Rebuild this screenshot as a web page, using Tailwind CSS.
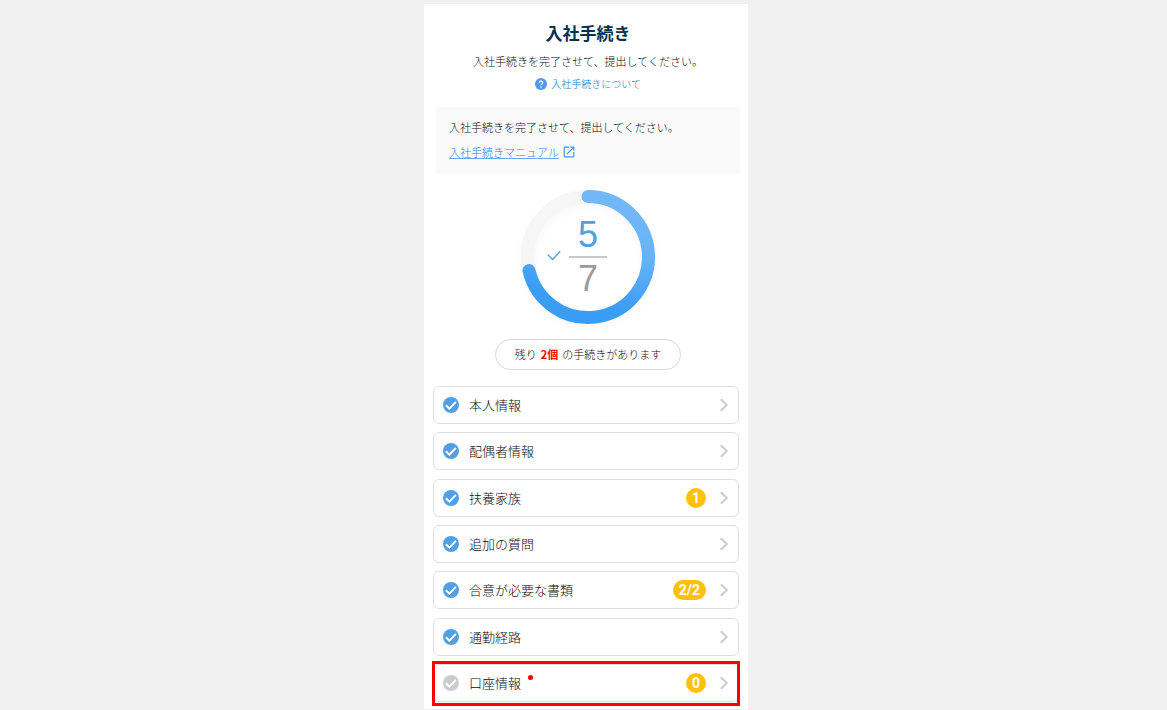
<!DOCTYPE html>
<html lang="ja">
<head>
    <meta charset="UTF-8">
    <meta name="viewport" content="width=device-width, initial-scale=1.0">
    <title>入社手続き</title>
    <script src="https://cdn.jsdelivr.net/npm/@tailwindcss/browser@4"></script>
    <style>
        body { font-family: 'Noto Sans CJK JP', sans-serif; }
    </style>
</head>
<body class="bg-[#f1f1f1] text-[#0c0c0c] font-light">

    <!-- アイコン -->
    <svg class="hidden">
        <symbol id="icon-check" viewBox="0 0 16 16">
            <circle cx="8" cy="8" r="8" fill="currentColor"/>
            <path d="M2.9 8.200l3.500 3.400 6.500-6.700" fill="none" stroke="#fff" stroke-width="1.9"/>
        </symbol>
        <symbol id="icon-chevron" viewBox="0 0 10 14">
            <path d="M1.800 1.200L7.800 7l-6 5.800" fill="none" stroke="currentColor" stroke-width="2"/>
        </symbol>
    </svg>

    <div class="min-h-screen flex flex-col pt-1 pb-px pl-[5px]">
        <main class="w-full max-w-[324px] mx-auto flex-1 flex flex-col bg-white pt-[17px] pb-[7px]">

            <header class="pl-3 pr-2 text-center">
                <h1 class="text-[17px] leading-6 font-bold text-[#06304c]">入社手続き</h1>
                <p class="mt-[6px] text-[11px] leading-5">入社手続きを完了させて、提出してください。</p>
                <a href="#" class="mt-[3px] flex items-center justify-center gap-1 text-[10px] leading-5 text-[#007bdc]">
                    <svg class="size-3" viewBox="0 0 12 12">
                        <circle cx="6" cy="6" r="6" fill="#5596ee"/>
                        <path d="M4.300 4.700a1.700 1.700 0 1 1 2.600 1.400C6.200 6.500 6 6.700 6 7.300" fill="none" stroke="#fff" stroke-width="1.2"/>
                        <circle cx="6" cy="9" r="0.8" fill="#fff"/>
                    </svg>
                    入社手続きについて
                </a>
            </header>

            <section class="mt-[13px] ml-3 mr-2 px-[13px] pt-[10px] pb-3 bg-[#fafafa] text-[11px] leading-5">
                <p>入社手続きを完了させて、提出してください。</p>
                <a href="#" class="mt-[5px] flex items-center gap-1 text-[#2f7cf2]">
                    <span class="underline decoration-[#6ba3f5]">入社手続きマニュアル</span>
                    <svg class="size-3" viewBox="2 2 20 20" fill="#4f91f3"><path d="M19 19H5V5h7V3H5a2 2 0 0 0-2 2v14a2 2 0 0 0 2 2h14c1.100 0 2-.9 2-2v-7h-2v7zM14 3v2h3.590l-9.830 9.830 1.410 1.410L19 6.410V10h2V3h-7z"/></svg>
                </a>
            </section>

            <!-- 進捗 -->
            <section class="pl-3 pr-2 flex flex-col items-center">
                <div class="relative mt-4 size-[134px]">
                    <svg class="block size-full overflow-visible" viewBox="0 0 134 134" fill="none">
                        <defs>
                            <linearGradient id="ring" gradientUnits="userSpaceOnUse" x1="90" y1="10" x2="60" y2="128">
                                <stop offset="0" stop-color="#72b8f8"/>
                                <stop offset="0.4" stop-color="#66b2f8"/>
                                <stop offset="0.85" stop-color="#3a9df5"/>
                            </linearGradient>
                            <filter id="soft" x="-20%" y="-20%" width="140%" height="140%">
                                <feGaussianBlur stdDeviation="4"/>
                            </filter>
                        </defs>
                        <circle cx="67" cy="70" r="60" stroke="#000" stroke-opacity="0.03" stroke-width="13" filter="url(#soft)"/>
                        <circle cx="67" cy="67" r="60.500" stroke="#f6f6f6" stroke-width="13"/>
                        <path d="M67 6.500A60.500 60.500 0 1 1 8 80.500" stroke="url(#ring)" stroke-width="13" stroke-linecap="round"/>
                    </svg>
                    <div class="absolute inset-0 pb-px flex flex-col items-center justify-center font-['Liberation_Sans',Arial,sans-serif] text-[36px] leading-[42px]">
                        <span class="text-[#529fe2]">5</span>
                        <span class="w-[38px] border-t-2 border-[#c8c8c8]"></span>
                        <span class="text-[#9c9c9c]">7</span>
                    </div>
                    <svg class="absolute left-[26px] top-[60px] w-[14px] h-[11px]" viewBox="0 0 14 11" fill="none" stroke="#529fe2" stroke-width="1.4"><path d="M0.800 4.800l4.800 4.700L13.200 1.300"/></svg>
                </div>
                <p class="mt-[15px] w-[186px] h-[31px] flex items-center justify-center gap-1 rounded-full border border-[#d8d8d8] text-[11px]">
                    残り <strong class="font-bold text-[#ff0000]">2個</strong> の手続きがあります
                </p>
            </section>

            <!-- 手続き一覧 -->
            <ul class="mt-4 px-[9px] flex-1 flex flex-col justify-between text-[13px] leading-5">
                <li>
                    <a href="#" class="h-[38px] pl-[9px] pr-[9px] flex items-center rounded-md border border-[#dedede]">
                        <svg class="size-4 mr-[10px] text-[#539fe3]"><use href="#icon-check"/></svg>
                        <span>本人情報</span>
                        <svg class="ml-auto w-[10px] h-[14px] text-[#cccccc]"><use href="#icon-chevron"/></svg>
                    </a>
                </li>
                <li>
                    <a href="#" class="h-[38px] pl-[9px] pr-[9px] flex items-center rounded-md border border-[#dedede]">
                        <svg class="size-4 mr-[10px] text-[#539fe3]"><use href="#icon-check"/></svg>
                        <span>配偶者情報</span>
                        <svg class="ml-auto w-[10px] h-[14px] text-[#cccccc]"><use href="#icon-chevron"/></svg>
                    </a>
                </li>
                <li>
                    <a href="#" class="h-[38px] pl-[9px] pr-[9px] flex items-center rounded-md border border-[#dedede]">
                        <svg class="size-4 mr-[10px] text-[#539fe3]"><use href="#icon-check"/></svg>
                        <span>扶養家族</span>
                        <span class="ml-auto mr-[13px] px-[6px] rounded-full bg-[#ffc107] font-[Roboto,sans-serif] text-[14px] font-bold text-white">1</span>
                        <svg class="w-[10px] h-[14px] text-[#cccccc]"><use href="#icon-chevron"/></svg>
                    </a>
                </li>
                <li>
                    <a href="#" class="h-[38px] pl-[9px] pr-[9px] flex items-center rounded-md border border-[#dedede]">
                        <svg class="size-4 mr-[10px] text-[#539fe3]"><use href="#icon-check"/></svg>
                        <span>追加の質問</span>
                        <svg class="ml-auto w-[10px] h-[14px] text-[#cccccc]"><use href="#icon-chevron"/></svg>
                    </a>
                </li>
                <li>
                    <a href="#" class="h-[38px] pl-[9px] pr-[9px] flex items-center rounded-md border border-[#dedede]">
                        <svg class="size-4 mr-[10px] text-[#539fe3]"><use href="#icon-check"/></svg>
                        <span>合意が必要な書類</span>
                        <span class="ml-auto mr-[13px] px-[6px] rounded-full bg-[#ffc107] font-[Roboto,sans-serif] text-[14px] font-bold text-white">2/2</span>
                        <svg class="w-[10px] h-[14px] text-[#cccccc]"><use href="#icon-chevron"/></svg>
                    </a>
                </li>
                <li>
                    <a href="#" class="h-[38px] pl-[9px] pr-[9px] flex items-center rounded-md border border-[#dedede]">
                        <svg class="size-4 mr-[10px] text-[#539fe3]"><use href="#icon-check"/></svg>
                        <span>通勤経路</span>
                        <svg class="ml-auto w-[10px] h-[14px] text-[#cccccc]"><use href="#icon-chevron"/></svg>
                    </a>
                </li>
                <!-- 未完了 -->
                <li class="relative">
                    <a href="#" class="h-[38px] pl-[9px] pr-[9px] flex items-center rounded-md border border-[#dedede]">
                        <svg class="size-4 mr-[10px] text-[#cccccc]"><use href="#icon-check"/></svg>
                        <span>口座情報</span>
                        <span class="self-start mt-[10px] ml-[7px] size-[5px] rounded-full bg-[#ee0000]"></span>
                        <span class="ml-auto mr-[13px] px-[6px] rounded-full bg-[#ffc107] font-[Roboto,sans-serif] text-[14px] font-bold text-white">0</span>
                        <svg class="w-[10px] h-[14px] text-[#cccccc]"><use href="#icon-chevron"/></svg>
                    </a>
                    <div class="absolute -top-[3px] -bottom-[4px] -inset-x-px border-3 border-[#ff0000] pointer-events-none"></div>
                </li>
            </ul>
        </main>
    </div>

</body>
</html>
